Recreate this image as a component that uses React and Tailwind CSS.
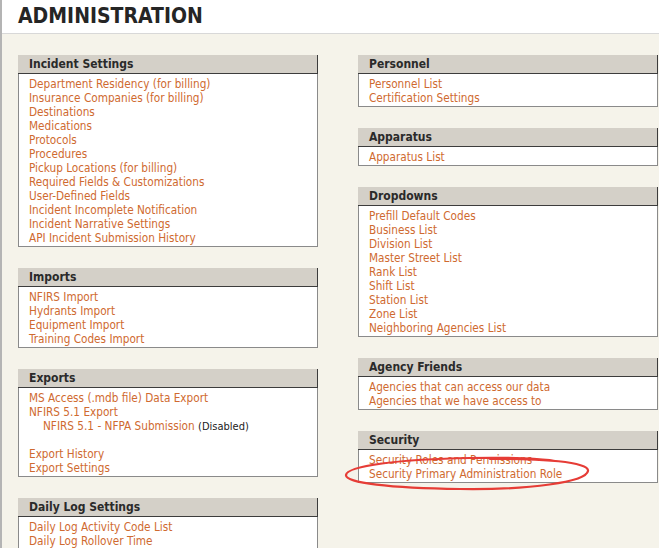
import React from 'react';

// Admin landing page: two columns of link panels

const leftSections = [
  {
    title: 'Incident Settings',
    items: [
      'Department Residency (for billing)',
      'Insurance Companies (for billing)',
      'Destinations',
      'Medications',
      'Protocols',
      'Procedures',
      'Pickup Locations (for billing)',
      'Required Fields & Customizations',
      'User-Defined Fields',
      'Incident Incomplete Notification',
      'Incident Narrative Settings',
      'API Incident Submission History',
    ],
  },
  {
    title: 'Imports',
    items: ['NFIRS Import', 'Hydrants Import', 'Equipment Import', 'Training Codes Import'],
  },
  {
    title: 'Exports',
    custom: 'exports',
  },
  {
    title: 'Daily Log Settings',
    items: ['Daily Log Activity Code List', 'Daily Log Rollover Time'],
  },
];

const rightSections = [
  { title: 'Personnel', items: ['Personnel List', 'Certification Settings'] },
  { title: 'Apparatus', items: ['Apparatus List'] },
  {
    title: 'Dropdowns',
    items: [
      'Prefill Default Codes',
      'Business List',
      'Division List',
      'Master Street List',
      'Rank List',
      'Shift List',
      'Station List',
      'Zone List',
      'Neighboring Agencies List',
    ],
  },
  { title: 'Agency Friends', items: ['Agencies that can access our data', 'Agencies that we have access to'] },
  { title: 'Security', items: ['Security Roles and Permissions', 'Security Primary Administration Role'] },
];

function Link({ children, className = '' }) {
  return (
    <a href="#" className={`block text-[#cf6a30] no-underline whitespace-nowrap ${className}`}>
      {children}
    </a>
  );
}

function ExportsBody() {
  return (
    <>
      <Link>MS Access (.mdb file) Data Export</Link>
      <Link>NFIRS 5.1 Export</Link>
      <div className="pl-[14px] whitespace-nowrap">
        <a href="#" className="text-[#cf6a30]">NFIRS 5.1 - NFPA Submission</a>{' '}
        <span className="text-[11px] text-[#222]">(Disabled)</span>
      </div>
      <div className="h-[13px]" />
      <Link>Export History</Link>
      <Link>Export Settings</Link>
    </>
  );
}

function Panel({ section }) {
  return (
    <div className="w-[300px]">
      <div className="h-[19px] bg-[#d4d0c8] border-r border-b border-[#3c3c3c] pl-[11px] text-[12px] leading-[19px] font-bold text-[#2a2a2a]">
        {section.title}
      </div>
      <div className="bg-white border border-t-0 border-[#8a8a8a] pl-[10px] pt-[3px] pb-[1px] text-[11.7px] leading-[14px]">
        {section.custom === 'exports' ? (
          <ExportsBody />
        ) : (
          section.items.map((item) => <Link key={item}>{item}</Link>)
        )}
      </div>
    </div>
  );
}

export default function App() {
  return (
    <div className="relative h-[548px] overflow-hidden bg-[#f5f3ea] border-l-2 border-[#b4b4b4] font-['DejaVu_Sans_Condensed','DejaVu_Sans',sans-serif]">
      <div className="h-[34px] bg-white border-b border-[#d8d8d8] pl-[16px]">
        <h1 className="text-[21px] leading-[33px] font-bold text-[#252525]">ADMINISTRATION</h1>
      </div>

      <div className="flex gap-[40px] pl-[16px] pt-[21px]">
        <div className="flex flex-col gap-[21px]">
          {leftSections.map((s) => (
            <Panel key={s.title} section={s} />
          ))}
        </div>
        <div className="flex flex-col gap-[21px]">
          {rightSections.map((s) => (
            <Panel key={s.title} section={s} />
          ))}
        </div>
      </div>

      {/* hand-drawn highlight around the primary admin role link */}
      <svg
        className="absolute left-[338px] top-[452px] pointer-events-none"
        width="256"
        height="44"
        viewBox="0 0 256 44"
      >
        <path
          d="M150 7 C 200 6, 250 10, 248 19 C 246 30, 190 38, 120 37 C 50 36, 5 31, 6 23 C 7 14, 60 7, 130 6 C 170 5, 204 7, 215 9"
          fill="none"
          stroke="#e63c36"
          strokeWidth="2.2"
          strokeLinecap="round"
        />
      </svg>
    </div>
  );
}
